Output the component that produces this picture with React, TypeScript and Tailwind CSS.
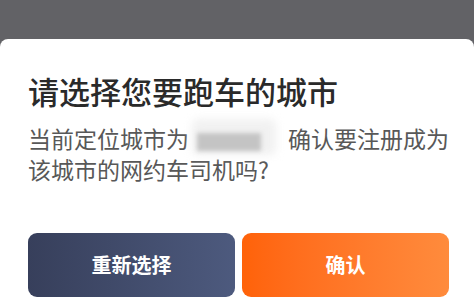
export default function App() {
  const font = { fontFamily: '"Noto Sans CJK SC", "Noto Sans", sans-serif' };
  return (
    <div className="w-[474px] h-[307px] bg-[#626266] flex flex-col overflow-hidden" style={font}>
      <div className="h-[39px] shrink-0" />
      <div className="flex-1 bg-white rounded-t-[8px] pl-[28px] pr-[25px] pt-[33px] flex flex-col">
        <h1 className="text-[31px] leading-[37px] font-medium text-[#2a2a2a] whitespace-nowrap">
          请选择您要跑车的城市
        </h1>
        <p className="mt-[14px] text-[23px] leading-[31px] text-[#585858] whitespace-nowrap">
          当前定位城市为
          <span className="relative inline-block w-[99px] h-[31px] align-top">
            <span className="absolute left-[3px] top-[-4px] w-[84px] h-[36px] bg-[#f1f1f1] blur-[4px] rounded-md" />
            <span className="absolute left-[8px] top-[10px] w-[64px] h-[18px] bg-[#c4c4c4] blur-[2px]" />
          </span>
          确认要注册成为
          <br />
          该城市的网约车司机吗?
        </p>
        <div className="mt-[48px] flex gap-[7px]">
          <button className="flex-1 h-[64px] rounded-[9px] bg-gradient-to-r from-[#373f5b] to-[#4d5a7e] text-white text-[20px] font-semibold">
            重新选择
          </button>
          <button className="flex-1 h-[64px] rounded-[9px] bg-gradient-to-r from-[#ff6208] to-[#ff8b3c] text-white text-[20px] font-semibold">
            确认
          </button>
        </div>
      </div>
    </div>
  );
}
